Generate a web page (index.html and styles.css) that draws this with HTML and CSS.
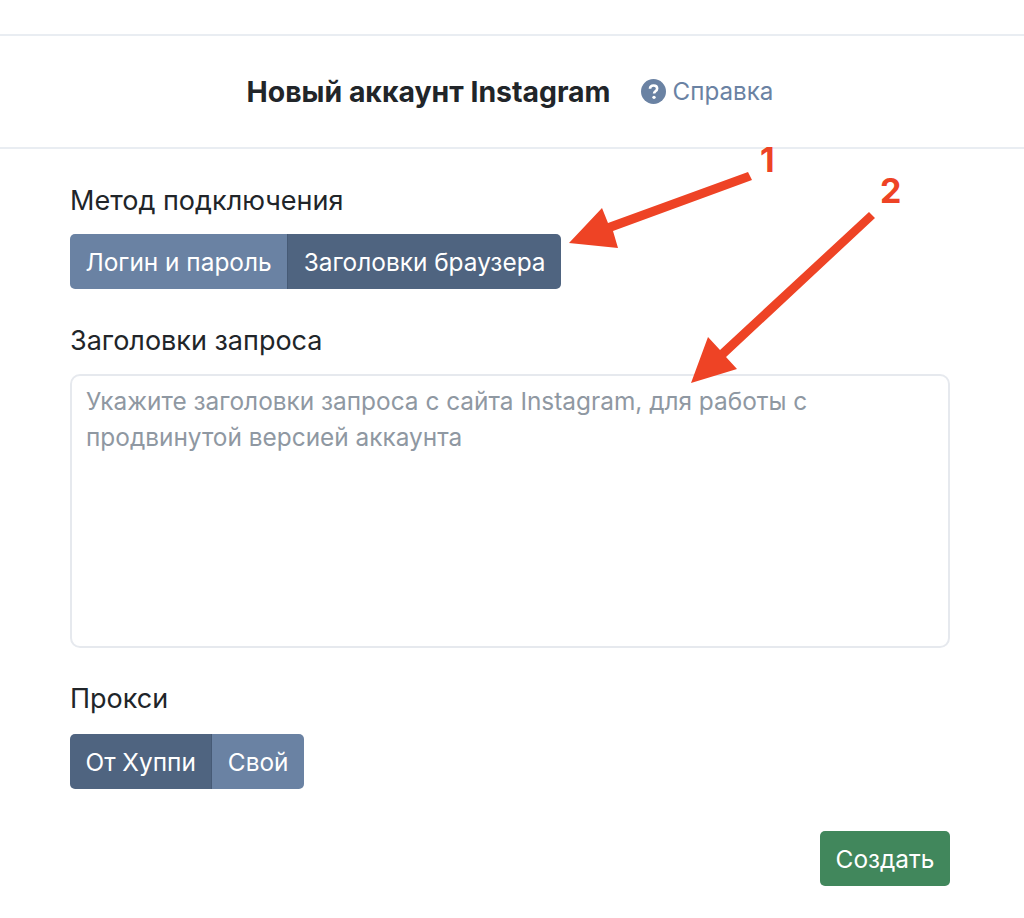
FILE: index.html
```html
<!DOCTYPE html>
<html lang="ru">
<head>
  <meta charset="UTF-8">
  <title>Новый аккаунт Instagram</title>
  <link rel="stylesheet" href="styles.css">
</head>
<body>
  <div class="page">
    <div class="modal-top"></div>
    <div class="modal-header">
      <h1 class="modal-title">Новый аккаунт Instagram</h1>
      <a class="help-link" href="#">
        <svg class="help-icon" viewBox="0 0 24 24"><circle cx="12" cy="12" r="12" fill="#6a82a3"/><path d="M8.600 9.400c.1-2 1.500-3.200 3.500-3.200s3.400 1.100 3.400 2.900c0 1.300-.7 2-1.700 2.700-.9.6-1.200 1-1.200 1.900v.3" fill="none" stroke="#fff" stroke-width="2.500"/><circle cx="12.500" cy="17.600" r="1.600" fill="#fff"/></svg>
        Справка
      </a>
    </div>
    <form class="modal-body">
      <div class="field field-method">
        <label class="field-label">Метод подключения</label>
        <div class="btn-group">
          <button type="button" class="btn">Логин и пароль</button>
          <button type="button" class="btn active">Заголовки браузера</button>
        </div>
      </div>
      <div class="field field-headers">
        <label class="field-label">Заголовки запроса</label>
        <textarea class="headers-input" placeholder="Укажите заголовки запроса с сайта Instagram, для работы с продвинутой версией аккаунта"></textarea>
      </div>
      <div class="field field-proxy">
        <label class="field-label">Прокси</label>
        <div class="btn-group">
          <button type="button" class="btn active">От Хуппи</button>
          <button type="button" class="btn">Свой</button>
        </div>
      </div>
      <div class="form-footer">
        <button type="button" class="btn-create">Создать</button>
      </div>
    </form>
  </div>

  <!-- стрелки поверх скриншота -->
  <svg class="arrows" viewBox="0 0 1024 918">
    <path d="M748 172L752 180L613 231L618 248L569 243L602 208L608 223Z" fill="#ee4325"/>
    <path d="M869 212L875 218L726 357L737 369L691 383L708 337L720 350Z" fill="#ee4325"/>
    <text class="arrow-num" x="760" y="172">1</text>
    <text class="arrow-num" x="880" y="203">2</text>
  </svg>
</body>
</html>
```

FILE: styles.css
```css
* {
  padding: 0;
  margin: 0;
  box-sizing: border-box;
}
body {
  font-family: 'Inter', 'Noto Sans', sans-serif;
  color: #212529;
  background-color: #fff;
  overflow: hidden;
}
.page {
  position: relative;
  width: 1024px;
  height: 918px;
}
.modal-top {
  height: 36px;
  border-bottom: 2px solid #e9edf2;
}
.modal-header {
  display: flex;
  align-items: center;
  justify-content: center;
  height: 113px;
  padding: 0 4px 0 0;
  border-bottom: 2px solid #e9edf2;
}
.modal-title {
  font-size: 28.4px;
  font-weight: 700;
  line-height: 36px;
}
.help-link {
  display: flex;
  align-items: center;
  margin-left: 30px;
  font-size: 24.2px;
  color: #6a82a3;
  text-decoration: none;
}
.help-icon {
  width: 25px;
  height: 25px;
  margin-right: 7px;
}
.modal-body {
  padding: 0 74px 0 70px;
}
.field-label {
  display: block;
  font-size: 27px;
  line-height: 38px;
}
.field-method {
  padding-top: 33px;
}
.field-headers {
  padding-top: 33px;
}
.field-proxy {
  padding-top: 32px;
}
.btn-group {
  display: inline-flex;
  margin-top: 14px;
  border-radius: 5px;
  overflow: hidden;
}
.field-proxy .btn-group {
  margin-top: 16px;
}
.btn {
  height: 55px;
  padding: 0 15.5px;
  font-family: inherit;
  font-size: 24.4px;
  color: #fff;
  background-color: #6a82a3;
  border: none;
}
.btn + .btn {
  border-left: 1px solid #465a75;
}
.btn.active {
  background-color: #4f6480;
}
.headers-input {
  display: block;
  width: 880px;
  height: 274px;
  margin-top: 14px;
  padding: 7px 14px;
  font-family: inherit;
  font-size: 24.4px;
  line-height: 36px;
  color: #212529;
  border: 2px solid #e6e9ee;
  border-radius: 10px;
  outline: none;
  resize: none;
}
.headers-input::placeholder {
  color: #8f98a2;
  opacity: 1;
}
.form-footer {
  display: flex;
  justify-content: flex-end;
  margin-top: 42px;
}
.btn-create {
  width: 130px;
  height: 55px;
  font-family: inherit;
  font-size: 24.4px;
  color: #fff;
  background-color: #41875c;
  border: none;
  border-radius: 5px;
}
.arrows {
  position: absolute;
  top: 0;
  left: 0;
  width: 1024px;
  height: 918px;
  pointer-events: none;
}
.arrow-num {
  font-family: 'Inter', sans-serif;
  font-size: 34px;
  font-weight: 700;
  fill: #ee4325;
}
```
